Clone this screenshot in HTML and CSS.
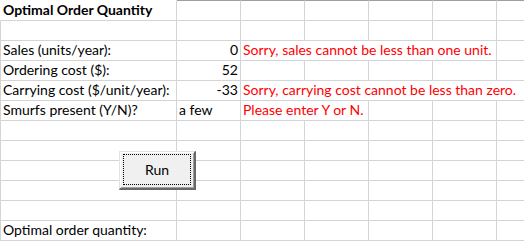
FILE: index.html
```html
<!DOCTYPE html>
<html lang="en">

<head>
    <meta charset="UTF-8">
    <meta name="viewport" content="width=device-width, initial-scale=1.0">
    <title>Optimal Order Quantity</title>
    <link rel="stylesheet" href="styles.css">
</head>

<body>
    <div class="sheet">
        <div class="grid">
            <!-- row 1 -->
            <div class="cell col-a first title">Optimal Order Quantity</div>
            <div class="cell top"></div>
            <div class="cell top"></div>
            <div class="cell top"></div>
            <div class="cell top"></div>
            <div class="cell top"></div>
            <div class="cell top"></div>

            <!-- row 2 -->
            <div class="cell col-a"></div>
            <div class="cell"></div>
            <div class="cell"></div>
            <div class="cell"></div>
            <div class="cell"></div>
            <div class="cell"></div>
            <div class="cell"></div>

            <!-- row 3 -->
            <div class="cell col-a">Sales (units/year):</div>
            <div class="cell num">0</div>
            <div class="cell msg span-4">Sorry, sales cannot be less than one unit.</div>
            <div class="cell"></div>

            <!-- row 4 -->
            <div class="cell col-a">Ordering cost ($):</div>
            <div class="cell num">52</div>
            <div class="cell"></div>
            <div class="cell"></div>
            <div class="cell"></div>
            <div class="cell"></div>
            <div class="cell"></div>

            <!-- row 5 -->
            <div class="cell col-a">Carrying cost ($/unit/year):</div>
            <div class="cell num">-33</div>
            <div class="cell msg span-5">Sorry, carrying cost cannot be less than zero.</div>

            <!-- row 6 -->
            <div class="cell col-a">Smurfs present (Y/N)?</div>
            <div class="cell">a few</div>
            <div class="cell msg span-2">Please enter Y or N.</div>
            <div class="cell"></div>
            <div class="cell"></div>
            <div class="cell"></div>

            <!-- rows 7-11 -->
            <div class="cell col-a"></div>
            <div class="cell"></div>
            <div class="cell"></div>
            <div class="cell"></div>
            <div class="cell"></div>
            <div class="cell"></div>
            <div class="cell"></div>

            <div class="cell col-a"></div>
            <div class="cell"></div>
            <div class="cell"></div>
            <div class="cell"></div>
            <div class="cell"></div>
            <div class="cell"></div>
            <div class="cell"></div>

            <div class="cell col-a"></div>
            <div class="cell"></div>
            <div class="cell"></div>
            <div class="cell"></div>
            <div class="cell"></div>
            <div class="cell"></div>
            <div class="cell"></div>

            <div class="cell col-a"></div>
            <div class="cell"></div>
            <div class="cell"></div>
            <div class="cell"></div>
            <div class="cell"></div>
            <div class="cell"></div>
            <div class="cell"></div>

            <div class="cell col-a"></div>
            <div class="cell"></div>
            <div class="cell"></div>
            <div class="cell"></div>
            <div class="cell"></div>
            <div class="cell"></div>
            <div class="cell"></div>

            <!-- row 12 -->
            <div class="cell col-a">Optimal order quantity:</div>
            <div class="cell"></div>
            <div class="cell"></div>
            <div class="cell"></div>
            <div class="cell"></div>
            <div class="cell"></div>
            <div class="cell"></div>
        </div>

        <button class="run-btn" type="button"><span class="focus">Run</span></button>
    </div>
</body>

</html>
```

FILE: styles.css
```css
body {
    margin: 0;
    background-color: #ffffff;
    font-family: Lato, "Open Sans", sans-serif;
    font-size: 14px;
    color: #000000;
    overflow: hidden;
}

.sheet {
    position: relative;
    width: 524px;
    height: 241px;
    overflow: hidden;
}

.grid {
    display: grid;
    grid-template-columns: 177px 64px 64px 64px 64px 64px 64px;
    grid-template-rows: 21px repeat(11, 20px);
}

.cell {
    box-sizing: border-box;
    border-right: 1px solid #d4d4d4;
    border-bottom: 1px solid #d4d4d4;
    padding: 0 2px 1px 2px;
    display: flex;
    align-items: flex-end;
    white-space: nowrap;
    line-height: 18px;
}

.col-a {
    border-left: 1px solid #d4d4d4;
}

.first {
    border-left-color: #ffffff;
    border-top: 1px solid #ffffff;
}

.top {
    border-top: 1px solid #9e9e9e;
}

.title {
    font-weight: bold;
}

.num {
    justify-content: flex-end;
}

.msg {
    color: #ff0000;
}

.span-2 {
    grid-column: span 2;
}

.span-4 {
    grid-column: span 4;
}

.span-5 {
    grid-column: span 5;
    border-right: none;
}

.run-btn {
    position: absolute;
    left: 119px;
    top: 151px;
    width: 77px;
    height: 39px;
    box-sizing: border-box;
    margin: 0;
    padding: 2px 3px 3px 3px;
    background-color: #f0f0f0;
    border-style: solid;
    border-width: 1px 2px 2px 1px;
    border-color: #e3e3e3 #696969 #696969 #e3e3e3;
    box-shadow: inset 1px 1px 0 #ffffff, inset -1px -1px 0 #a0a0a0;
    font-family: inherit;
    font-size: 14px;
    color: #000000;
}

.focus {
    display: flex;
    align-items: center;
    justify-content: center;
    height: 100%;
    border: 1px dotted #000000;
    box-sizing: border-box;
}
```
